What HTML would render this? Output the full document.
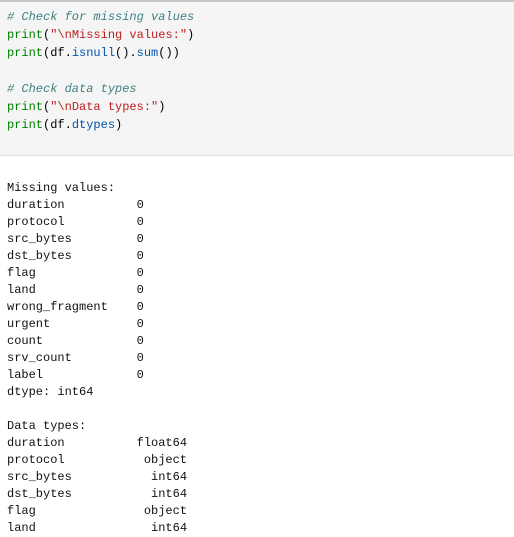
<!DOCTYPE html>
<html><head><style>
body{margin:0;background:#fff;width:514px;height:535px;overflow:hidden;font-family:"Liberation Mono",monospace;font-size:12px;color:#000}
.code{position:absolute;left:0;top:0;width:514px;height:153px;background:#f5f5f5;border-top:2px solid #c8c8c8;border-bottom:1px solid #e0e0e0}
pre{margin:0;font-family:inherit;font-size:12px}
.code pre{position:absolute;left:7px;top:6px;line-height:18px}
.out{position:absolute;left:7px;top:180px;line-height:17px;color:#111}
.c{color:#408080;font-style:italic}.k{color:#008000}.s{color:#ba2121}.a{color:#0055aa}
</style></head><body>
<div class="code"><pre><span class="c"># Check for missing values</span>
<span class="k">print</span>(<span class="s">"\nMissing values:"</span>)
<span class="k">print</span>(df.<span class="a">isnull</span>().<span class="a">sum</span>())

<span class="c"># Check data types</span>
<span class="k">print</span>(<span class="s">"\nData types:"</span>)
<span class="k">print</span>(df.<span class="a">dtypes</span>)</pre></div>
<pre class="out">Missing values:
duration          0
protocol          0
src_bytes         0
dst_bytes         0
flag              0
land              0
wrong_fragment    0
urgent            0
count             0
srv_count         0
label             0
dtype: int64

Data types:
duration          float64
protocol           object
src_bytes           int64
dst_bytes           int64
flag               object
land                int64</pre>
</body></html>
